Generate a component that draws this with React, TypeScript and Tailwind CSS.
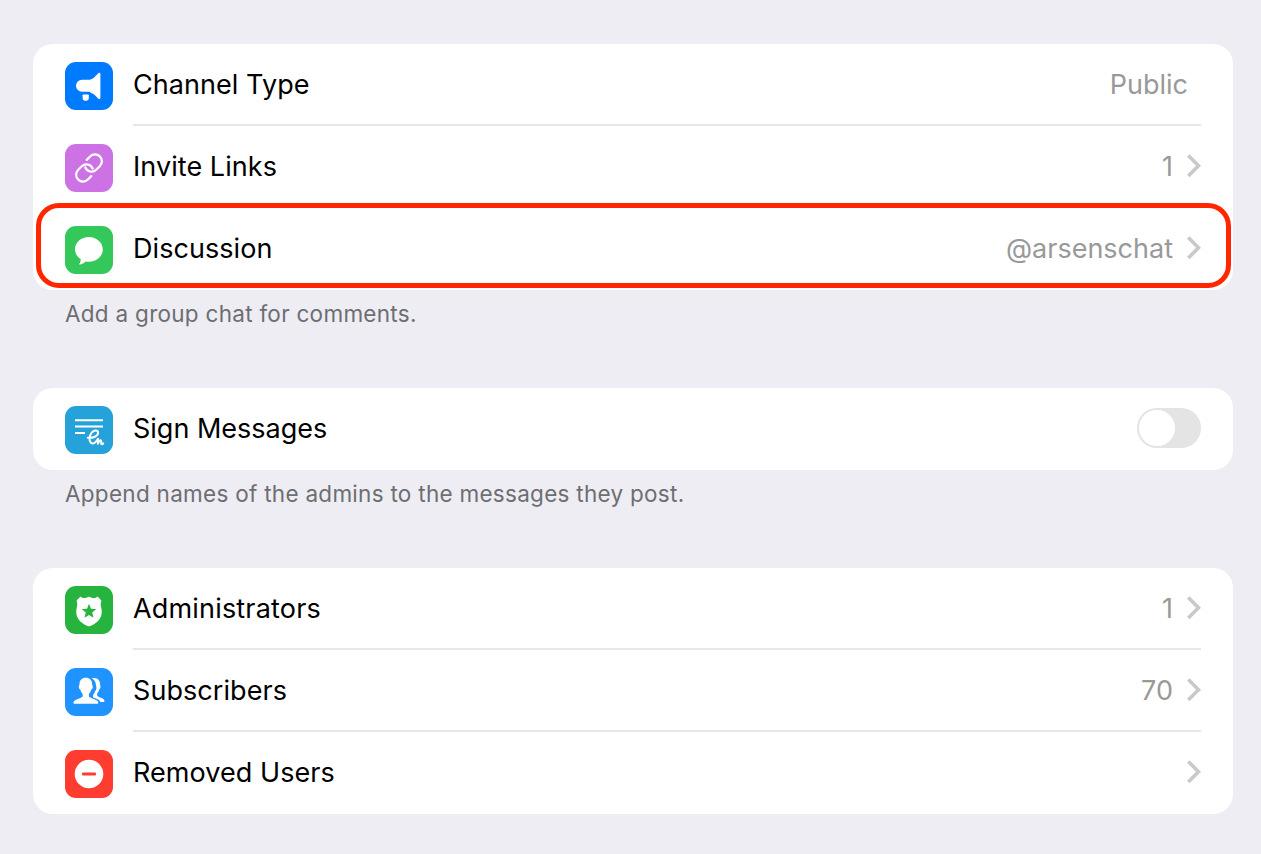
import type { ReactNode } from 'react'

const MegaphoneIcon = () => (
  <svg viewBox="0 0 48 48" className="size-12" fill="#fff">
    <path d="M17 17.800h6.500c3.800 0 6.500-3 9.500-6.300 1-1.100 2.400-.8 2.400.7v23.600c0 1.500-1.400 1.800-2.400.8-2.600-2.700-4-4.700-7-5.500-.5-.9-1.300-1.300-2.400-1.300H17a6 6 0 0 1 0-12z" />
    <path d="M18.500 32.400h4.400a.9.9 0 0 1 .9.900v2.700a2.700 2.700 0 0 1-2.700 2.700h-.8a2.700 2.700 0 0 1-2.700-2.700v-2.700a.9.9 0 0 1 .9-.9z" />
  </svg>
)

const LinkIcon = () => (
  <svg viewBox="0 0 48 48" className="size-12" fill="none" stroke="#fff" strokeWidth="2.200" strokeLinecap="round">
    <path d="M21.700 15.900l3.400-3.400a6.600 6.600 0 0 1 9.800 9.600l-3.700 3.600a6.700 6.700 0 0 1-10.900-2.200" />
    <path d="M26.300 32.100l-3.400 3.400a6.600 6.600 0 0 1-9.800-9.600l3.700-3.600a6.700 6.700 0 0 1 10.900 2.200" />
  </svg>
)

const BubbleIcon = () => (
  <svg viewBox="0 0 48 48" className="size-12" fill="#fff">
    <path d="M23.900 11C16.200 11 10 16.500 10 23.300c0 4 2.200 7.600 5.600 9.800.2 1.700-.3 3.400-1.400 4.800-.3.400 0 .7.500.6 2.400-.4 4.400-1.500 6-3.100 1 .2 2.100.3 3.200.3 7.700 0 13.900-5.500 13.900-12.300S31.600 11 23.900 11z" />
  </svg>
)

const SignatureIcon = () => (
  <svg viewBox="0 0 48 48" className="size-12" fill="none" stroke="#fff" strokeWidth="2" strokeLinecap="round" strokeLinejoin="round">
    <path strokeLinecap="butt" d="M10 14.200h28M10 20.500h28M10 27h10" />
    <path d="M22.800 31.700c4.700.8 10.300-1.700 10.300-5 0-2.700-3.800-3-6.200-.3-2.600 3-3.400 8.400-.9 10.500 2.300 1.800 5.300-.8 7-4.100.4 1.600.3 3.200-.1 4.900.9-2 2-3.700 3-3.400 1.200.5-.5 3.400.6 3.900.7.300 1.300-.2 1.700-.8" />
  </svg>
)

const BadgeIcon = () => (
  <svg viewBox="0 0 48 48" className="size-12">
    <path
      fill="#fff"
      d="M14.800 11.200c.5-.5 1.200-.4 1.700 0 1.600 1.200 3.700 1.100 5.400.2l1.200-.5c.6-.3 1.200-.3 1.800 0l1.200.5c1.700.9 3.800 1 5.400-.2.5-.4 1.200-.5 1.700 0l2.800 2.900c.5.500.6 1.100.2 1.700-1.300 2.600.2 5.400.5 8.400.6 7.300-3.300 12.200-11.400 15.800-.9.400-1.700.4-2.600 0-8.100-3.600-12-8.500-11.400-15.800.3-3 1.800-5.800.5-8.400-.4-.6-.3-1.200.2-1.700z"
    />
    <path fill="#27b43e" d="M24 17.800l2 4.900 5.300.4-4.100 3.400 1.300 5.200-4.500-2.800-4.500 2.800 1.300-5.200-4.100-3.400 5.300-.4z" />
  </svg>
)

const PeopleIcon = () => (
  <svg viewBox="0 0 48 48" className="size-12" fill="#fff">
    <path d="M20.800 9.800c-4 0-6.300 2.500-6.300 6.500 0 1-.8 1.200-.7 2.600.1 1.300.8 2.200 1.500 2.600.4 1.900 1.200 3.300 2.400 4.400v2.400c0 1-3 2.100-5.400 3-2.500.9-3.800 1.900-3.900 3.700 0 .5.300.8.800.8h23.300c.5 0 .8-.3.800-.8-.1-1.800-1.400-2.800-3.900-3.700-2.400-.9-5.500-2-5.500-3v-2.400c1.200-1.100 2-2.500 2.400-4.400.7-.4 1.400-1.300 1.500-2.600.1-1.400-.7-1.600-.7-2.600 0-4-2.300-6.500-6.300-6.500z" />
    <path d="M26.800 10.300c5.100-1.600 8.500 1.500 8.300 6.500 0 .9.500 1.100.4 2.300-.1 1.300-.7 2-1.300 2.400-.4 1.600-1 2.900-2 3.800v2.200c0 .9 2.500 1.900 4.300 2.600 1.900.7 2.900 1.700 3 3.200 0 .4-.3.700-.7.700h-3.400c-1.200-2.700-5.400-3.800-7.400-4.800v-2.100c1-1.200 1.700-2.400 2.100-3.900 1.200-1.100 1.500-2.700 1.300-4.200-.1-.7-.5-1.200-.5-2 0-2.900-1.700-5.400-4.100-6.700z" />
  </svg>
)

const MinusIcon = () => (
  <svg viewBox="0 0 48 48" className="size-12">
    <circle cx="24" cy="24" r="14.300" fill="#fff" />
    <rect x="17" y="22.500" width="14" height="3" rx="1" fill="#ff3c30" />
  </svg>
)

const Chevron = () => (
  <svg viewBox="0 0 16 24" className="ml-3 h-6 w-4 shrink-0" fill="none" stroke="#c9c9c9" strokeWidth="3.600">
    <path d="M3.300 1.600 13.500 11.800 3.300 22" />
  </svg>
)

const Toggle = () => (
  <button type="button" role="switch" aria-checked="false" aria-label="Sign Messages" className="flex h-10 w-16 items-center rounded-full bg-[#e4e4e4] p-0.5">
    <span className="size-9 rounded-full bg-white" />
  </button>
)

type RowProps = {
  icon: ReactNode
  color: string
  label: string
  spacing?: string
  value?: string
  chevron?: boolean
  toggle?: boolean
  divider?: boolean
}

function Row({ icon, color, label, spacing = 'tracking-[0.06px]', value, chevron, toggle, divider }: RowProps) {
  return (
    <div className="flex h-[82px] px-8">
      <div className={`mt-[18px] size-12 shrink-0 overflow-hidden rounded-[11px] ${color}`}>{icon}</div>
      <div className={`ml-5 flex flex-1 items-center border-b-2 ${divider ? 'border-[#e6e6e8]' : 'border-transparent'}`}>
        <span className={`flex-1 pt-0.5 whitespace-nowrap text-[27px] text-black ${spacing}`}>{label}</span>
        {value && (
          <span className={`pt-0.5 whitespace-nowrap text-[27px] text-[#999999] ${chevron ? '' : 'mr-[13px]'}`}>{value}</span>
        )}
        {chevron && <Chevron />}
        {toggle && <Toggle />}
      </div>
    </div>
  )
}

const Card = ({ children }: { children: ReactNode }) => (
  <div className="relative rounded-[20px] bg-white">{children}</div>
)

const Footnote = ({ children }: { children: ReactNode }) => (
  <p className="mt-2 pl-8 text-[22.5px] leading-8 tracking-[0.28px] text-[#6d6d72]">{children}</p>
)

export default function App() {
  return (
    <main className="h-[854px] w-[1261px] overflow-hidden bg-[#eeedf3] pt-11 pr-7 pl-[33px] font-['Inter',sans-serif]">
      <section className="h-[344px]">
        <Card>
          <Row icon={<MegaphoneIcon />} color="bg-[#007aff]" label="Channel Type" value="Public" divider />
          <Row icon={<LinkIcon />} color="bg-[#cd72e4]" label="Invite Links" value="1" chevron divider />
          <Row icon={<BubbleIcon />} color="bg-[#34c759]" label="Discussion" value="@arsenschat" chevron />
          {/* Highlight around the discussion row */}
          <div className="pointer-events-none absolute top-[159px] right-0.5 left-[3px] h-[85px] rounded-[23px] border-5 border-[#ff2600]" />
        </Card>
        <Footnote>Add a group chat for comments.</Footnote>
      </section>

      <section className="h-[180px]">
        <Card>
          <Row icon={<SignatureIcon />} color="bg-[#26a2db]" label="Sign Messages" spacing="tracking-normal" toggle />
        </Card>
        <Footnote>Append names of the admins to the messages they post.</Footnote>
      </section>

      <Card>
        <Row icon={<BadgeIcon />} color="bg-[#27b43e]" label="Administrators" spacing="tracking-[0.18px]" value="1" chevron divider />
        <Row icon={<PeopleIcon />} color="bg-[#1f93ff]" label="Subscribers" value="70" chevron divider />
        <Row icon={<MinusIcon />} color="bg-[#ff3c30]" label="Removed Users" chevron />
      </Card>
    </main>
  )
}
